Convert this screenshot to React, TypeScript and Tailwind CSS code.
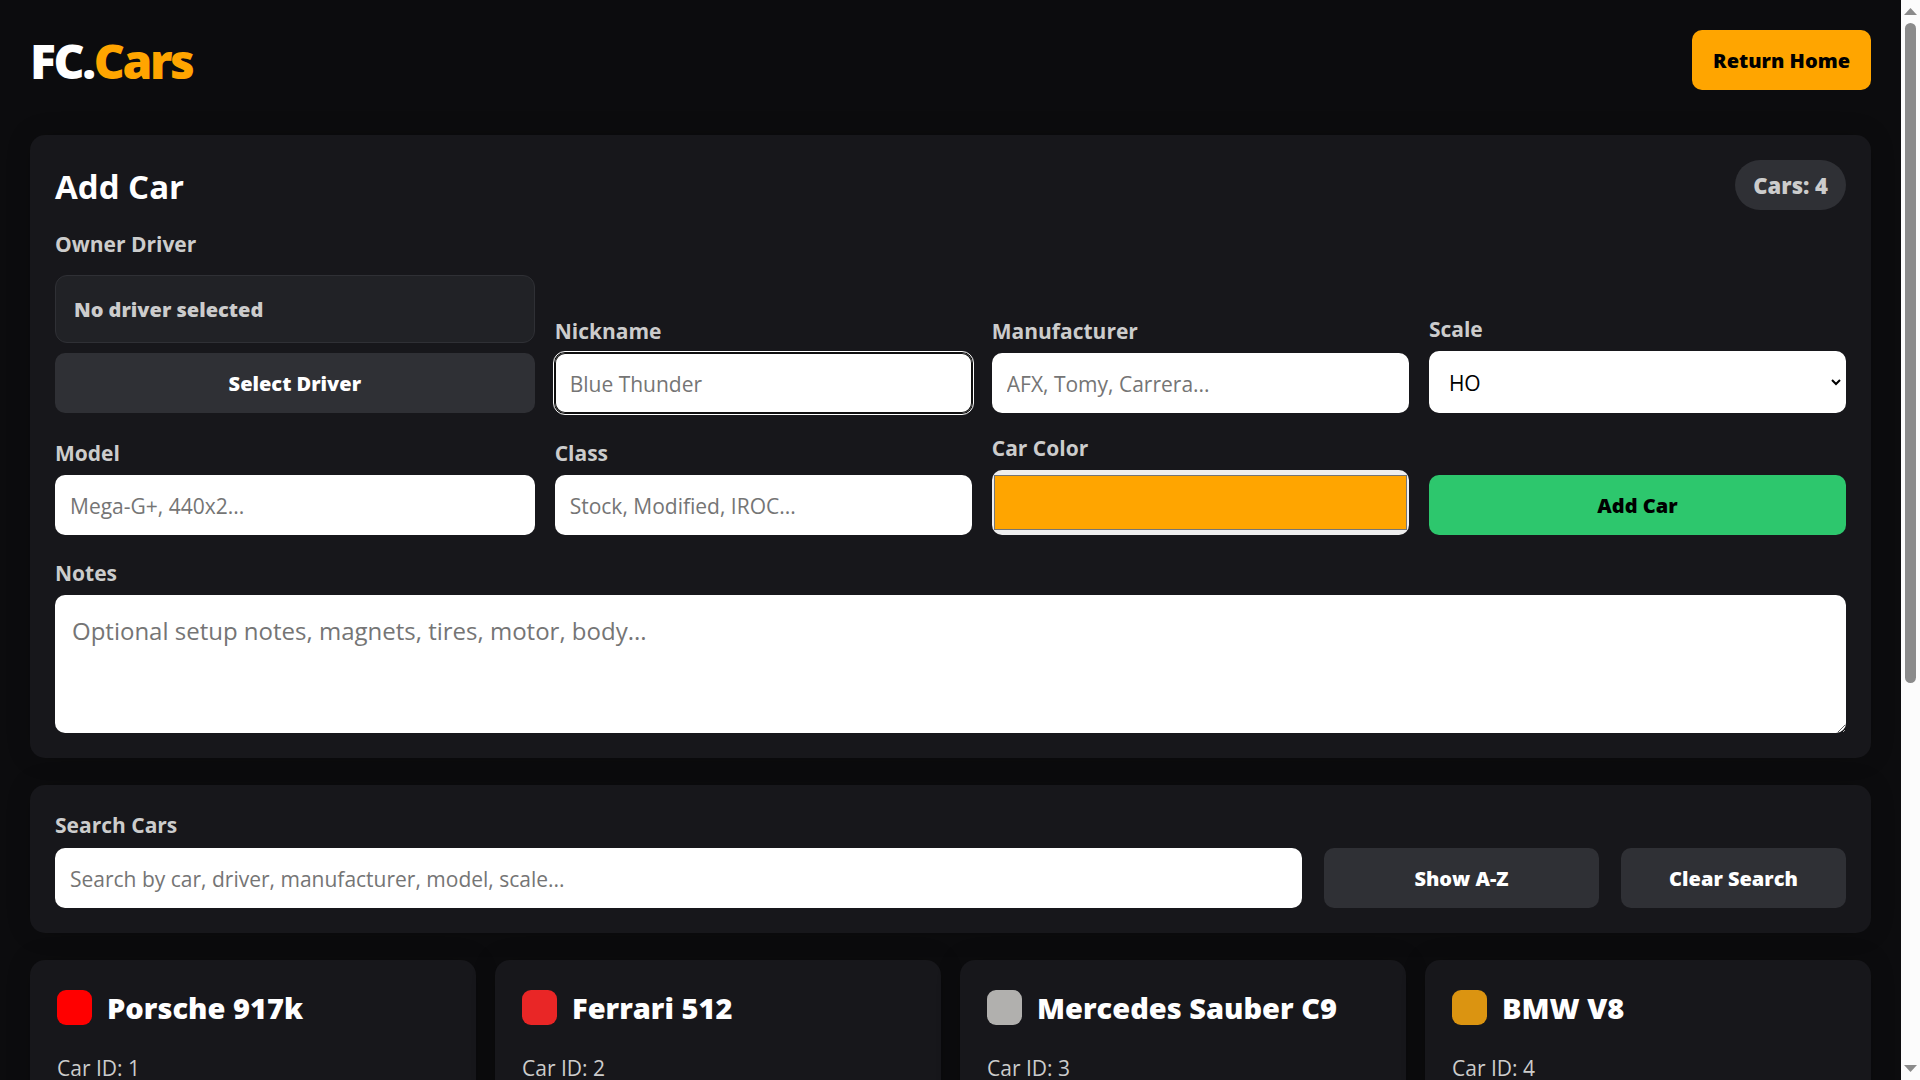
import React from "react";

type Car = { id: number; name: string; color: string };

const cars: Car[] = [
  { id: 1, name: "Porsche 917k", color: "bg-[#ff0000]" },
  { id: 2, name: "Ferrari 512", color: "bg-[#e92626]" },
  { id: 3, name: "Mercedes Sauber C9", color: "bg-[#b1b0ae]" },
  { id: 4, name: "BMW V8", color: "bg-[#db9411]" },
];

const panelClass = "rounded-[15px] bg-[#17171b] shadow-[0_0_25px_rgba(0,0,0,0.2)]";
const labelClass = "text-[21px] leading-[30px] font-bold text-[#cccccc]";
const inputClass =
  "h-[60px] w-full rounded-[10px] bg-white px-[15px] pt-0.5 text-[21px] text-black placeholder:text-[#757575]";
const buttonClass = "h-[60px] rounded-[10px] pt-0.5 text-[20px] font-extrabold";
const darkButton = "bg-[#2f3035] text-white";

function Field({ id, label, children }: { id: string; label: string; children: React.ReactNode }) {
  return (
    <div className="flex flex-col gap-[7px]">
      <label htmlFor={id} className={labelClass}>
        {label}
      </label>
      {children}
    </div>
  );
}

function AddCarPanel() {
  return (
    <section className={`${panelClass} p-[25px]`}>
      <div className="flex items-center justify-between">
        <h2 className="pt-1 text-[33px] leading-[46px] font-bold text-white">Add Car</h2>
        <span className="rounded-full bg-[#2f3035] px-[18px] text-[22px] leading-[50px] font-extrabold text-[#cccccc]">
          Cars: 4
        </span>
      </div>
      <form className="mt-[19px]" onSubmit={(e) => e.preventDefault()}>
        <div className="grid grid-cols-[1.15fr_1fr_1fr_1fr] items-end gap-5">
          <div className="flex flex-col">
            <span className={labelClass}>Owner Driver</span>
            <div className="mt-4 rounded-[12px] border border-[#2f3035] bg-[#212226] px-[18px] pt-0.5 text-[20px] leading-[64px] font-extrabold text-[#cccccc]">
              No driver selected
            </div>
            <button type="button" className={`${buttonClass} ${darkButton} mt-[10px]`}>
              Select Driver
            </button>
          </div>
          <Field id="nickname" label="Nickname">
            <input
              id="nickname"
              placeholder="Blue Thunder"
              className={`${inputClass} ring-1 inset-ring-1 ring-[#101010] inset-ring-[#101010] outline-1 outline-offset-1 outline-white`}
            />
          </Field>
          <Field id="manufacturer" label="Manufacturer">
            <input id="manufacturer" placeholder="AFX, Tomy, Carrera..." className={inputClass} />
          </Field>
          <Field id="scale" label="Scale">
            <select
              id="scale"
              className="h-[62px] w-full rounded-[10px] border-2 border-white bg-white px-[14px] pt-0.5 text-[21px] text-black"
            >
              <option>HO</option>
            </select>
          </Field>
          <Field id="model" label="Model">
            <input id="model" placeholder="Mega-G+, 440x2..." className={inputClass} />
          </Field>
          <Field id="class" label="Class">
            <input id="class" placeholder="Stock, Modified, IROC..." className={inputClass} />
          </Field>
          <Field id="color" label="Car Color">
            <input
              id="color"
              type="color"
              defaultValue="#ffa500"
              className="h-[65px] w-full rounded-[10px] bg-[#efefef] px-[2px] py-[5px] [&::-webkit-color-swatch-wrapper]:p-0 [&::-webkit-color-swatch]:border [&::-webkit-color-swatch]:border-[#767676]"
            />
          </Field>
          <button type="submit" className={`${buttonClass} bg-[#2dc76d] text-black`}>
            Add Car
          </button>
        </div>
        <div className="mt-[23px]">
          <Field id="notes" label="Notes">
            <textarea
              id="notes"
              placeholder="Optional setup notes, magnets, tires, motor, body..."
              className="h-[138px] w-full resize rounded-[10px] bg-white px-[17px] py-[18px] text-[24px] leading-[36px] text-black placeholder:text-[#757575]"
            />
          </Field>
        </div>
      </form>
    </section>
  );
}

function SearchPanel() {
  return (
    <section className={`${panelClass} grid grid-cols-[1fr_275px_225px] items-end gap-[22px] p-[25px]`}>
      <div className="flex flex-col gap-2">
        <label htmlFor="search" className={labelClass}>
          Search Cars
        </label>
        <input
          id="search"
          placeholder="Search by car, driver, manufacturer, model, scale..."
          className={inputClass}
        />
      </div>
      <button type="button" className={`${buttonClass} ${darkButton}`}>
        Show A-Z
      </button>
      <button type="button" className={`${buttonClass} ${darkButton}`}>
        Clear Search
      </button>
    </section>
  );
}

function CarCard({ car }: { car: Car }) {
  return (
    <article className={`${panelClass} min-h-[300px] px-[27px] py-[30px]`}>
      <div className="flex items-center gap-[15px]">
        <span className={`size-[35px] shrink-0 rounded-[9px] ${car.color}`} />
        <h3 className="text-[29px] leading-[35px] font-extrabold text-white">{car.name}</h3>
      </div>
      <p className="mt-[31px] text-[21px] leading-[24px] text-[#cccccc]">Car ID: {car.id}</p>
    </article>
  );
}

function ScrollTrack() {
  return (
    <div className="flex w-[19px] shrink-0 flex-col items-center justify-between bg-[#fcfcfc] py-2" aria-hidden="true">
      <svg width="13" height="7" viewBox="0 0 13 7">
        <path d="M0 7 6.5 0 13 7Z" fill="#8b8b8b" />
      </svg>
      <div className="mt-2 w-[11px] basis-[62%] rounded-full bg-[#8b8b8b]" />
      <div className="flex-1" />
      <svg width="13" height="7" viewBox="0 0 13 7">
        <path d="M0 0 6.5 7 13 0Z" fill="#8b8b8b" />
      </svg>
    </div>
  );
}

export default function App() {
  return (
    <div className="flex h-screen overflow-hidden bg-[#0c0c0e] font-['Open_Sans','Noto_Sans',sans-serif]">
      <main className="min-w-0 flex-1 overflow-hidden p-[30px]">
        <header className="flex h-[60px] items-center justify-between">
          <h1 className="pt-0.5 text-[48px] leading-[60px] font-extrabold tracking-tighter text-white">
            FC.<span className="text-[#ffa500]">Cars</span>
          </h1>
          <a
            href="#home"
            className="flex h-[60px] items-center rounded-[10px] bg-[#ffa500] px-[21px] pt-0.5 text-[20px] font-extrabold text-black"
          >
            Return Home
          </a>
        </header>
        <div className="mt-[45px] flex flex-col gap-[27px]">
          <AddCarPanel />
          <SearchPanel />
          <section className="grid grid-cols-4 gap-[19px]">
            {cars.map((car) => (
              <CarCard key={car.id} car={car} />
            ))}
          </section>
        </div>
      </main>
      <ScrollTrack />
    </div>
  );
}
